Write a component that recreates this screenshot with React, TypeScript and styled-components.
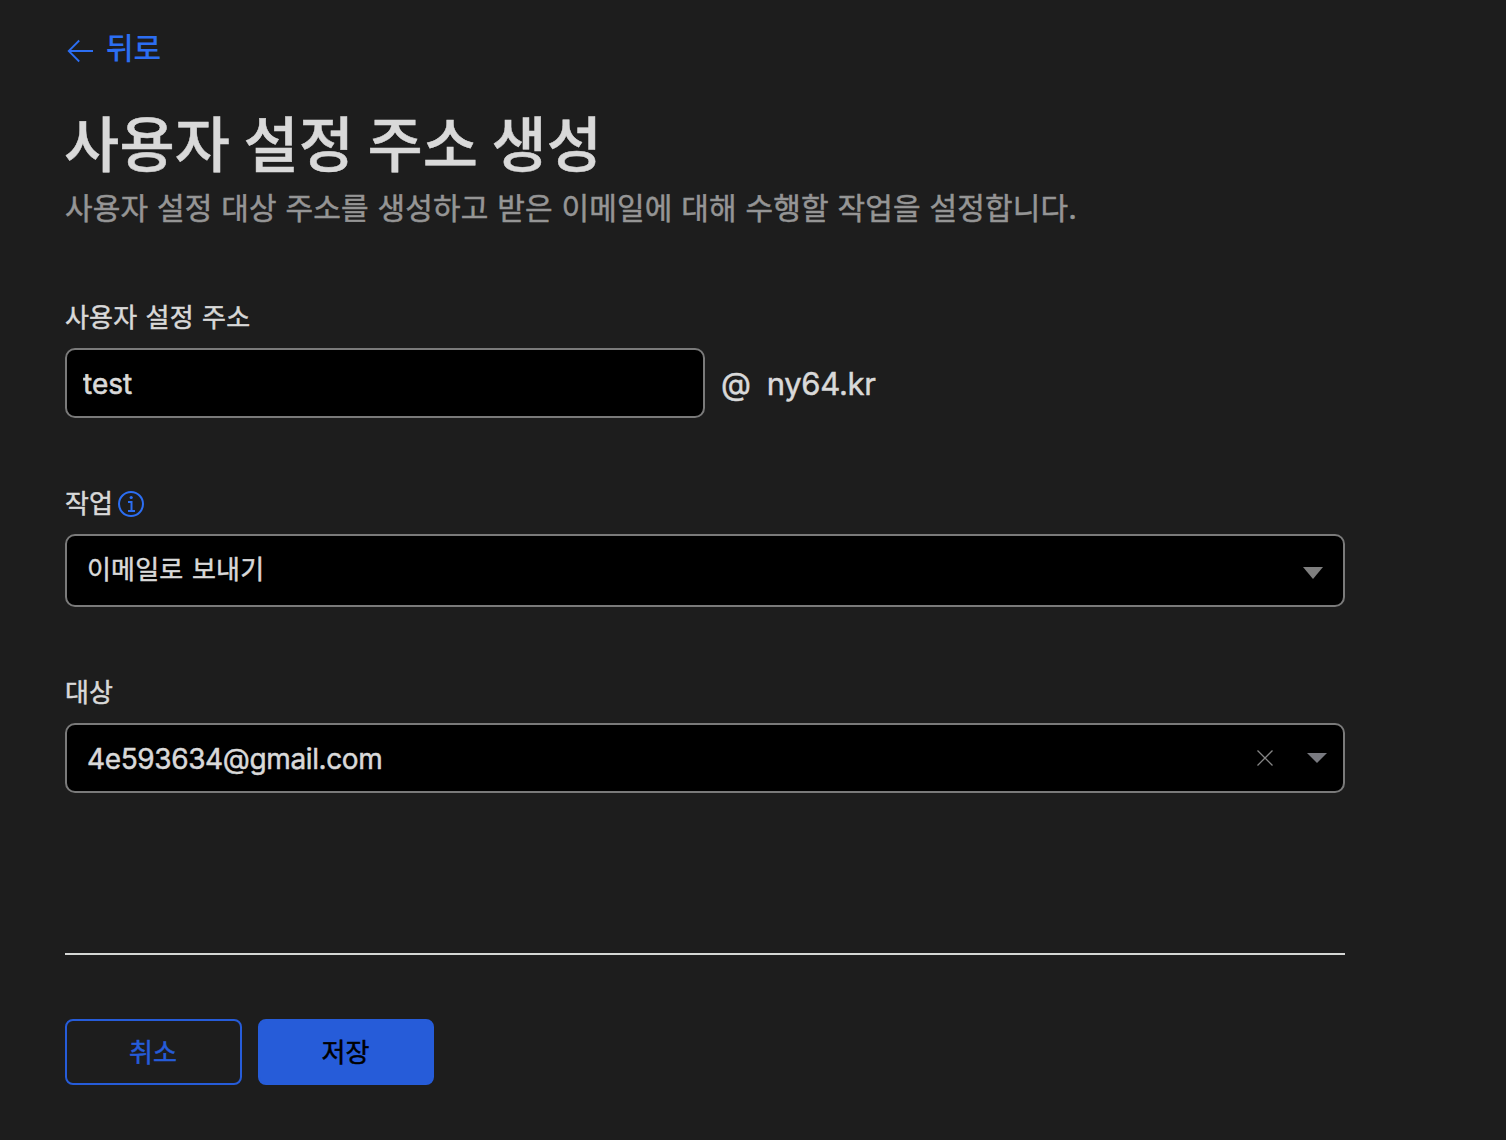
import React from "react";
import styled, { createGlobalStyle } from "styled-components";

const Global = createGlobalStyle`
  *, *::before, *::after { box-sizing: border-box; }
  body { margin: 0; background: #1d1d1d; }
`;

const Page = styled.main`
  min-height: 1140px;
  width: 1345px;
  padding: 28px 0 0 65px;
  background: #1d1d1d;
  color: #d9d9d9;
  font-family: Inter, "Noto Sans CJK KR", sans-serif;
`;

const Back = styled.a`
  display: flex;
  align-items: center;
  gap: 10px;
  height: 40px;
  color: #2c6ef2;
  font-size: 30px;
  line-height: 40px;
  font-weight: 500;
  text-decoration: none;
  svg { margin-top: 6px; }
`;

const Title = styled.h1`
  margin: 39px 0 0 -1px;
  height: 76px;
  font-size: 60px;
  line-height: 76px;
  font-weight: 500;
  letter-spacing: 0.2px;
  word-spacing: -3px;
  -webkit-text-stroke: 0.5px currentColor;
  white-space: nowrap;
`;

const Subtitle = styled.p`
  margin: 3px 0 0;
  height: 44px;
  font-size: 30px;
  line-height: 44px;
  letter-spacing: 0.19px;
  color: #959595;
  -webkit-text-stroke: 0.5px currentColor;
  white-space: nowrap;
`;

const Field = styled.section<{ $top: number }>`
  margin-top: ${(p) => p.$top}px;
`;

const Label = styled.label`
  display: flex;
  align-items: center;
  gap: 5px;
  height: 36px;
  margin-bottom: 12px;
  font-size: 26px;
  line-height: 36px;
  word-spacing: 0.7px;
  letter-spacing: 0.2px;
  -webkit-text-stroke: 0.5px currentColor;
`;

const Row = styled.div`
  display: flex;
  align-items: center;
`;

const Input = styled.input`
  width: 640px;
  height: 70px;
  padding: 2px 16px 0;
  border: 2px solid #7a7a7a;
  border-radius: 10px;
  background: #000;
  color: #d9d9d9;
  font: 400 28px Inter, sans-serif;
  -webkit-text-stroke: 0.6px currentColor;
  outline: none;
`;

const Domain = styled.span`
  display: flex;
  gap: 16px;
  margin-left: 16px;
  padding-top: 2px;
  font-size: 31px;
  line-height: 40px;
  letter-spacing: -0.3px;
  -webkit-text-stroke: 0.5px currentColor;
`;

const Select = styled.div<{ $height: number }>`
  display: flex;
  align-items: center;
  justify-content: space-between;
  height: ${(p) => p.$height}px;
  padding: 0 16px 0 20px;
  border: 2px solid #7a7a7a;
  border-radius: 10px;
  background: #000;
  color: #d9d9d9;
`;

const Value = styled.span<{ $latin?: boolean }>`
  font-size: ${(p) => (p.$latin ? 28 : 26)}px;
  line-height: 40px;
  letter-spacing: ${(p) => (p.$latin ? -0.38 : 0.2)}px;
  word-spacing: 1px;
  padding: ${(p) => (p.$latin ? "2px 0 0" : "0 0 2px")};
  -webkit-text-stroke: 0.5px currentColor;
`;

const Controls = styled.span`
  display: flex;
  align-items: center;
  gap: 33px;
`;

const Caret = styled.svg`
  margin: 4px 4px 0 0;
`;

const Divider = styled.hr`
  height: 2px;
  margin: 160px 0 64px;
  border: 0;
  background: #d5d7d5;
`;

const Actions = styled.div`
  display: flex;
  gap: 16px;
`;

const Button = styled.button<{ $primary?: boolean }>`
  width: ${(p) => (p.$primary ? 176 : 177)}px;
  height: 66px;
  padding: 0 1px 4px 0;
  border: 2px solid #265cd9;
  border-radius: 8px;
  background: ${(p) => (p.$primary ? "#265cd9" : "transparent")};
  color: ${(p) => (p.$primary ? "#000" : "#265cd9")};
  font: 400 26px Inter, "Noto Sans CJK KR", sans-serif;
  letter-spacing: 0.2px;
  -webkit-text-stroke: 0.5px currentColor;
`;

export default function App() {
  return (
    <>
      <Global />
      <Page>
        <Back>
          <svg width="31" height="26" viewBox="0 0 31 26" fill="none" stroke="currentColor" strokeWidth="1.8">
            <path d="M28 13H3.7M14.2 2.5L3.7 13l10.5 10.5" />
          </svg>
          뒤로
        </Back>
        <Title>사용자 설정 주소 생성</Title>
        <Subtitle>사용자 설정 대상 주소를 생성하고 받은 이메일에 대해 수행할 작업을 설정합니다.</Subtitle>
        <Field $top={70}>
          <Label htmlFor="address">사용자 설정 주소</Label>
          <Row>
            <Input id="address" defaultValue="test" />
            <Domain>
              <span>@</span>
              <span>ny64.kr</span>
            </Domain>
          </Row>
        </Field>
        <Field $top={68}>
          <Label>
            작업
            <svg width="26" height="26" viewBox="0 0 26 26" fill="none" stroke="#2c6ef2" strokeWidth="2">
              <circle cx="13" cy="13" r="12" />
              <path d="M10 11h3.5v9M10 20h7" />
              <circle cx="13.2" cy="6.5" r="1.6" fill="#2c6ef2" stroke="none" />
            </svg>
          </Label>
          <Select $height={73}>
            <Value>이메일로 보내기</Value>
            <Caret width="20" height="12" viewBox="0 0 20 12"><path d="M0 0h20L10 12z" fill="#7f7f7f" /></Caret>
          </Select>
        </Field>
        <Field $top={68}>
          <Label>대상</Label>
          <Select $height={70}>
            <Value $latin>4e593634@gmail.com</Value>
            <Controls>
              <svg width="18" height="18" viewBox="0 0 18 18" stroke="#858585" strokeWidth="1.3"><path d="M1.5 1.5l15 15M16.5 1.5l-15 15" /></svg>
              <svg width="20" height="10" viewBox="0 0 20 10"><path d="M0 0h20L10 10z" fill="#797a80" /></svg>
            </Controls>
          </Select>
        </Field>
        <Divider />
        <Actions>
          <Button>취소</Button>
          <Button $primary>저장</Button>
        </Actions>
      </Page>
    </>
  );
}
